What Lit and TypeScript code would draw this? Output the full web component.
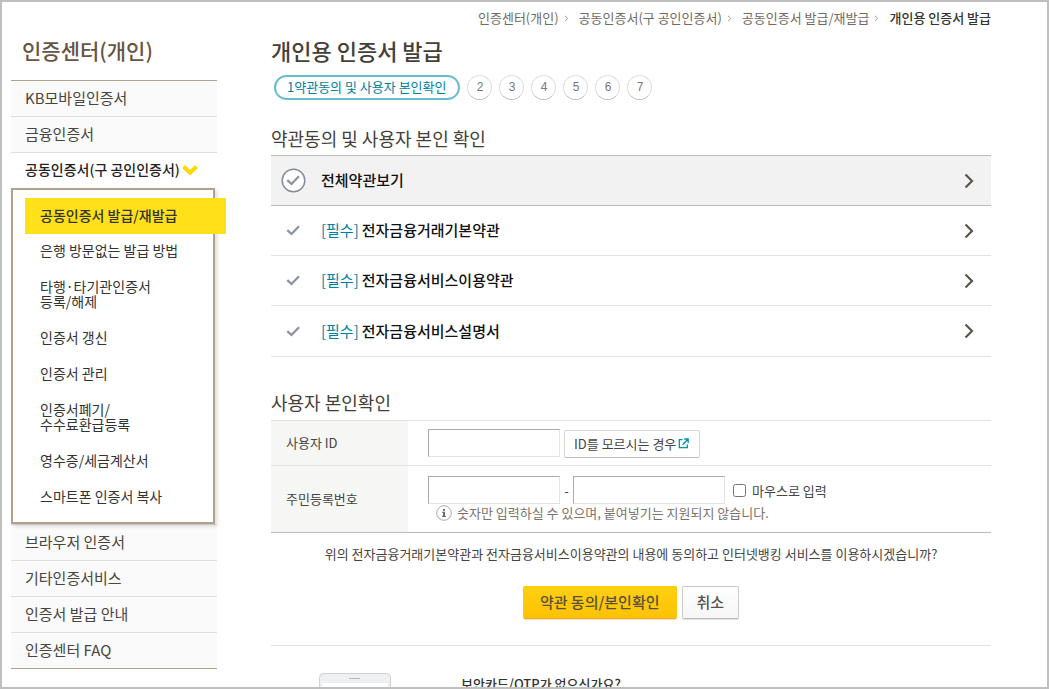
import { LitElement, html, css, svg } from "lit";
import { customElement } from "lit/decorators.js";

const chevron = html`<svg class="chev" viewBox="0 0 10 16" width="10" height="16" aria-hidden="true">
  <path d="M1.500 1.500 8 8l-6.500 6.500" fill="none" stroke="#5b564c" stroke-width="2.200" />
</svg>`;

const checkPath = svg`<path d="M6.300 12.200 10.500 16 18 8.300" fill="none" stroke="#8a939e" stroke-width="2.300" />`;

const STEPS = [2, 3, 4, 5, 6, 7];
const CRUMBS = ["인증센터(개인)", "공동인증서(구 공인인증서)", "공동인증서 발급/재발급"];
const TERMS = ["전자금융거래기본약관", "전자금융서비스이용약관", "전자금융서비스설명서"];
const SUBMENU: string[][] = [
  ["공동인증서 발급/재발급"],
  ["은행 방문없는 발급 방법"],
  ["타행·타기관인증서", "등록/해제"],
  ["인증서 갱신"],
  ["인증서 관리"],
  ["인증서폐기/", "수수료환급등록"],
  ["영수증/세금계산서"],
  ["스마트폰 인증서 복사"],
];

@customElement("side-menu")
export class SideMenu extends LitElement {
  static styles = css`
    :host { display: block; }
    h2 { margin: 0; padding: 0 11px; font-size: 21px; line-height: 30px; font-weight: 500; color: #665544; }
    ul { list-style: none; margin: 0; padding: 0; }
    a { color: inherit; text-decoration: none; display: block; }
    .menu { margin-top: 15px; border-top: 1px solid #b5a18b; border-bottom: 1px solid #b5a18b; font-size: 15px; color: #494440; }
    .item + .item { border-top: 1px solid #dedede; }
    .link { padding: 0 14px 2px; line-height: 33px; background: #fafafa; }
    .open .link { background: #fff; color: #222; font-size: 14px; font-weight: 500; display: flex; align-items: center; gap: 2px; white-space: nowrap; }
    .sub { margin-right: 2px; padding: 8px 0 6px; border: 2px solid #b5a18b; background: #fff; font-size: 14px; line-height: 15px; color: #333; position: relative; box-shadow: 2px 2px 4px rgba(0, 0, 0, .15); }
    .sub a { padding: 9px 0 12px 27px; }
    .sub .current { background: #ffe11a; margin: 0 -13px 0 12px; padding: 10px 0 11px 15px; font-weight: 500; }
  `;

  private item(label: string) {
    return html`<li class="item"><a class="link" href="#">${label}</a></li>`;
  }

  render() {
    return html`
      <h2>인증센터(개인)</h2>
      <ul class="menu">
        ${["KB모바일인증서", "금융인증서"].map((t) => this.item(t))}
        <li class="item open">
          <a class="link" href="#">공동인증서(구 공인인증서)
            <svg width="16" height="12" viewBox="0 0 16 12" aria-hidden="true"><path d="M1.500 2.500 8 8.800l6.500-6.300" fill="none" stroke="#ffd800" stroke-width="4" /></svg>
          </a>
          <ul class="sub">
            ${SUBMENU.map((lines, i) => html`<li><a class=${i === 0 ? "current" : ""} href="#">${lines.map((l, n) => (n ? html`<br />${l}` : l))}</a></li>`)}
          </ul>
        </li>
        ${["브라우저 인증서", "기타인증서비스", "인증서 발급 안내", "인증센터 FAQ"].map((t) => this.item(t))}
      </ul>
    `;
  }
}

@customElement("app-root")
export class AppRoot extends LitElement {
  static styles = css`
    :host { display: block; font-family: "Noto Sans CJK KR", "Noto Sans", sans-serif; color: #444; }
    * { box-sizing: border-box; }
    a { color: inherit; text-decoration: none; }
    h1, h2, p, ol, ul { margin: 0; padding: 0; list-style: none; }
    button, input { font-family: inherit; }
    .frame { height: 100vh; overflow: hidden; border: 2px solid #bfbfbf; background: #fff; display: grid; grid-template-columns: 206px minmax(0, 1fr); column-gap: 54px; padding: 0 56px 0 9px; }
    side-menu { margin-top: 33px; }
    .crumbs { display: flex; justify-content: flex-end; margin-top: 6px; font-size: 13px; line-height: 20px; color: #716a64; white-space: nowrap; }
    .crumbs li { display: flex; align-items: center; }
    .crumbs svg { margin: 0 10px 0 5px; }
    .crumbs .here { color: #333; font-weight: 500; }
    h1 { margin-top: 7px; font-size: 22px; line-height: 30px; font-weight: 500; color: #444038; }
    .steps { display: flex; gap: 7px; margin: 10px 0 0 3px; font-size: 13px; line-height: 20px; }
    .step { width: 25px; height: 25px; border: 1px solid #dcdcdc; border-bottom-color: #bbb; border-radius: 13px; text-align: center; color: #777; font: 12px/22px "Liberation Sans", sans-serif; }
    .now { height: 25px; border: 2px solid #68bccd; border-radius: 13px; padding: 0 12px 0 11px; color: #00809f; }
    h2 { font-size: 18px; line-height: 26px; font-weight: 400; color: #444038; }
    .terms-title { margin-top: 25px; }
    .terms { margin-top: 4px; }
    .term { display: grid; grid-template-columns: 50px 1fr auto; align-items: center; height: 50px; padding-right: 17px; border-bottom: 1px solid #e3e3e3; font-size: 15px; font-weight: 500; color: #111; }
    .term.all, .term:last-child { height: 51px; }
    .term.all { background: #f2f2f2; border-top: 1px solid #bbb; border-bottom-color: #bbb; }
    .term a { padding-bottom: 2px; }
    .check { border: 0; padding: 0 0 0 10px; background: none; display: flex; }
    .need { color: #00809f; font-weight: 400; margin-right: 3px; }
    .chev { display: block; }
    .form-title { margin-top: 32px; }
    table { width: 100%; margin-top: 5px; border-collapse: collapse; font-size: 13px; border-top: 1px solid #e3e3e3; border-bottom: 1px solid #bbb; }
    tr + tr { border-top: 1px solid #e3e3e3; }
    th { width: 137px; padding: 0 15px 2px; background: #f6f6f4; text-align: left; font-weight: 400; }
    td { padding: 7px 20px; }
    tr + tr td { padding: 10px 20px; }
    .line { display: flex; align-items: center; }
    .text { width: 132px; height: 28px; margin: 0; border: 1px solid #e3e3e3; border-top-color: #aaa; border-left-color: #aaa; }
    .text.wide { width: 152px; }
    .dash { width: 13px; text-align: center; }
    .small { display: flex; align-items: center; gap: 2px; height: 28px; margin: 2px 0 0 4px; padding: 0 10px 2px 9px; border: 1px solid #d6d6d6; border-bottom-color: #bbb; border-radius: 2px; background: #fff; font-size: 13px; color: #444; }
    .tick { width: 13px; height: 13px; margin: 0 6px 0 8px; }
    .hint { display: flex; align-items: center; gap: 5px; margin: 0 0 0 8px; line-height: 18px; font-size: 13px; color: #7c726b; }
    .ask { margin-top: 11px; text-align: center; font-size: 13px; line-height: 20px; }
    .actions { display: flex; justify-content: center; gap: 5px; margin-top: 22px; padding-bottom: 26px; border-bottom: 1px solid #e3e3e3; }
    .btn { height: 33px; padding: 0 14px 2px; border: 1px solid #ccc; border-bottom-color: #bbb; border-radius: 2px; background: linear-gradient(#fff, #f6f6f6); font-size: 15px; font-weight: 500; color: #555; box-shadow: 0 1px 1px rgba(0, 0, 0, .12); }
    .primary { padding: 0 16px 2px; border-color: #fdcb0b; border-bottom-color: #fba800; background: linear-gradient(#ffd012, #fcc203); color: #5a5040; }
    .promo { display: grid; grid-template-columns: 72px 1fr; column-gap: 70px; padding: 27px 0 0 48px; }
    .promo p { font-size: 13px; line-height: 22px; color: #333; font-weight: 500; }
  `;

  private check(ring: boolean, label: string) {
    return html`<button class="check" type="button" aria-label=${label}>
      <svg width="25" height="25" viewBox="0 0 25 25">
        ${ring ? svg`<circle cx="12.500" cy="12.500" r="11.300" fill="#fff" stroke="#858d98" stroke-width="1.500" />` : ""}${checkPath}
      </svg>
    </button>`;
  }

  render() {
    return html`
      <div class="frame">
        <side-menu></side-menu>
        <main>
          <ol class="crumbs">
            ${CRUMBS.map((c) => html`<li><a href="#">${c}</a><svg width="5" height="7" viewBox="0 0 5 7"><path d="M1 .8 3.800 3.500 1 6.200" fill="none" stroke="#999" /></svg></li>`)}
            <li class="here">개인용 인증서 발급</li>
          </ol>
          <h1>개인용 인증서 발급</h1>
          <ol class="steps">
            <li class="now">1약관동의 및 사용자 본인확인</li>
            ${STEPS.map((n) => html`<li class="step">${n}</li>`)}
          </ol>

          <h2 class="terms-title">약관동의 및 사용자 본인 확인</h2>
          <ul class="terms">
            <li class="term all">${this.check(true, "전체약관보기")}<a href="#">전체약관보기</a>${chevron}</li>
            ${TERMS.map((t) => html`<li class="term">${this.check(false, t)}<a href="#"><span class="need">[필수]</span>${t}</a>${chevron}</li>`)}
          </ul>

          <h2 class="form-title">사용자 본인확인</h2>
          <table>
            <tr>
              <th scope="row"><label for="uid">사용자 ID</label></th>
              <td>
                <div class="line">
                  <input class="text" id="uid" type="text" />
                  <button class="small" type="button">ID를 모르시는 경우
                    <svg width="11" height="11" viewBox="0 0 11 11" fill="none" stroke="#0092ae" stroke-width="1.300" aria-hidden="true"><path d="M4.500 1.700H1.300v8h8V6.500M6.200 1h4v4M10 1.200 4.500 6.700" /></svg>
                  </button>
                </div>
              </td>
            </tr>
            <tr>
              <th scope="row"><label for="rrn1">주민등록번호</label></th>
              <td>
                <div class="line">
                  <input class="text" id="rrn1" type="text" />
                  <span class="dash">-</span>
                  <input class="text wide" type="password" aria-label="주민등록번호" />
                  <input class="tick" id="mouse" type="checkbox" /><label for="mouse">마우스로 입력</label>
                </div>
                <p class="hint">
                  <svg width="16" height="16" viewBox="0 0 16 16" aria-hidden="true"><circle cx="8" cy="8" r="7.300" fill="#fff" stroke="#aaa" /><path d="M7 4h2v1.800H7zM6.300 6.800H9v4h.9V12H6.200v-1.200H7.100V8h-.8z" fill="#666" /></svg>
                  숫자만 입력하실 수 있으며, 붙여넣기는 지원되지 않습니다.
                </p>
              </td>
            </tr>
          </table>

          <p class="ask">위의 전자금융거래기본약관과 전자금융서비스이용약관의 내용에 동의하고 인터넷뱅킹 서비스를 이용하시겠습니까?</p>
          <div class="actions">
            <button class="btn primary" type="button">약관 동의/본인확인</button>
            <button class="btn" type="button">취소</button>
          </div>
          <div class="promo">
            <svg width="72" height="110" viewBox="0 0 72 110" aria-hidden="true">
              <rect x=".5" y=".5" width="71" height="109" rx="4" fill="#eff0f2" stroke="#cfd1d4" />
              <path d="M30 5.500h11" stroke="#b8babd" /><rect x="3" y="10" width="66" height="90" rx="2" fill="#fff" />
            </svg>
            <p>보안카드/OTP가 없으신가요?</p>
          </div>
        </main>
      </div>
    `;
  }
}
